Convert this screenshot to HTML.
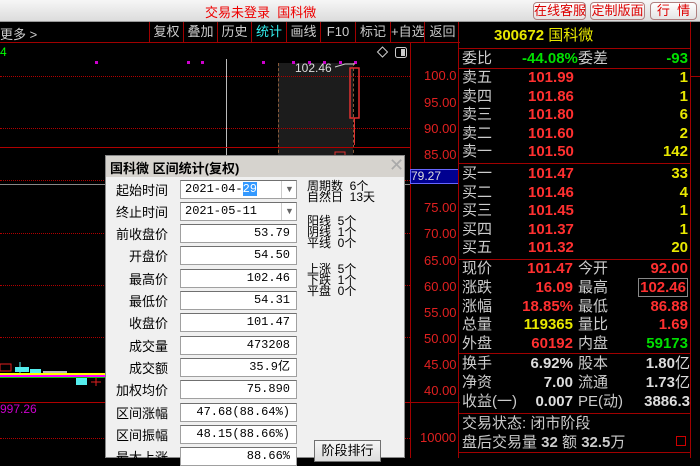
<!DOCTYPE html>
<html><head><meta charset="utf-8"><style>
*{margin:0;padding:0;box-sizing:border-box}
body{width:700px;height:458px;overflow:hidden;background:#000;font-family:"Liberation Sans","Noto Sans CJK SC",sans-serif;position:relative}
.a{position:absolute;white-space:nowrap}
#top{left:0;top:0;width:700px;height:22px;background:linear-gradient(#f6f6f6,#dcdcdc);border-bottom:1px solid #999}
.tb{top:2px;height:18px;border:1px solid #b08080;border-radius:4px;background:linear-gradient(#fff,#e4e4e4);color:#d00;font-size:13px;line-height:16px;text-align:center}
#tool{left:0;top:22px;width:460px;height:21px;border-bottom:1px solid #a00000}
.tt{top:22px;height:21px;border-left:1px solid #a00000;color:#ccc;font-size:13px;line-height:20px;text-align:center}
.ax{color:#e02020;font-size:13px;font-family:"Liberation Sans",sans-serif}
.dot{position:absolute;left:0;width:410px;border-top:1px dotted #b00000}
.p{font-size:15px;line-height:18px;color:#ccc}
.r{color:#ff3030}.y{color:#e8e800}.g{color:#00e000}.w{color:#ddd}
.num{font-family:"Liberation Sans",sans-serif;font-weight:bold;font-size:15px}
.hl{position:absolute;left:459px;width:232px;border-top:1px solid #a00000}
#dlg{left:105px;top:155px;width:300px;height:303px;background:#f0f0f0;border:1px solid #888}
.dlab{position:absolute;right:236px;font-size:13px;color:#000;text-align:right}
.inp{position:absolute;left:74px;width:117px;height:19px;background:#fff;border:1px solid #a0a0a0;border-top-color:#707070;font-family:"Liberation Mono",monospace;font-size:12px;text-align:right;padding-right:6px;line-height:17px;color:#000}
.sm{font-size:12px;color:#000;line-height:11px}
</style></head><body>
<div class="a" id="top"></div>
<div class="a" style="left:205px;top:2px;color:#e00;font-size:13px">交易未登录&nbsp;&nbsp;国科微</div>
<div class="a tb" style="left:533px;width:53px">在线客服</div>
<div class="a tb" style="left:590px;width:55px">定制版面</div>
<div class="a tb" style="left:650px;width:47px">行&nbsp;&nbsp;情</div>

<div class="a" id="tool"></div>
<div class="a" style="left:0;top:24px;color:#ccc;font-size:13px">更多 &gt;</div>
<div class="a tt" style="left:149px;width:34px">复权</div>
<div class="a tt" style="left:183px;width:34px">叠加</div>
<div class="a tt" style="left:217px;width:34px">历史</div>
<div class="a tt" style="left:251px;width:35px;color:#3ee">统计</div>
<div class="a tt" style="left:286px;width:34px">画线</div>
<div class="a tt" style="left:320px;width:35px">F10</div>
<div class="a tt" style="left:355px;width:35px">标记</div>
<div class="a tt" style="left:390px;width:34px">+自选</div>
<div class="a tt" style="left:424px;width:36px">返回</div>
<div class="a" style="left:0;top:45px;color:#0f0;font-size:12px">4</div>

<!-- chart -->
<div class="a" style="left:278px;top:63px;width:75px;height:95px;background:#1c1c1c;border-left:1px dashed #8a5a3a"></div>
<div class="a" style="left:353px;top:63px;height:95px;border-left:1px dashed #8a5a3a"></div>
<div class="a" style="left:226px;top:59px;width:1px;height:100px;background:#bbb"></div>
<div class="dot" style="top:76px"></div><div class="dot" style="top:128px"></div>
<div class="dot" style="top:180px"></div><div class="dot" style="top:233px"></div>
<div class="dot" style="top:285px"></div><div class="dot" style="top:337px"></div>
<div class="dot" style="top:438px"></div>
<div class="a" style="left:0;top:184px;width:410px;height:1px;background:#888"></div>
<div class="a" style="left:0;top:402px;width:410px;height:1px;background:#b00000"></div>
<div class="a" style="left:0;top:147px;width:410px;height:1px;background:#b00000"></div>
<svg class="a" style="left:0;top:45px" width="410" height="350">
<g fill="#c0c">
<rect x="95" y="16" width="3" height="3"/><rect x="187" y="16" width="3" height="3"/><rect x="201" y="16" width="3" height="3"/><rect x="262" y="16" width="3" height="3"/><rect x="292" y="16" width="3" height="3"/><rect x="308" y="16" width="3" height="3"/><rect x="323" y="16" width="3" height="3"/><rect x="339" y="16" width="3" height="3"/><rect x="354" y="16" width="3" height="3"/></g>
<rect x="350" y="23" width="9" height="50" fill="none" stroke="#e03030" stroke-width="1.5"/>
<line x1="354.5" y1="73" x2="354.5" y2="100" stroke="#e03030"/>
<rect x="335" y="107" width="10" height="10" fill="none" stroke="#e03030"/>
<path d="M335 22 l10 -3 l10 0" stroke="#ccc" fill="none"/>
<path d="M377.5 7 l5 -5 l5 5 l-5 5z" stroke="#ccc" fill="none"/>
<rect x="395.5" y="2.5" width="11" height="10" rx="2" stroke="#ccc" fill="none"/><rect x="401" y="4" width="4" height="7" fill="#ccc"/>
<g transform="translate(0,295)">
<rect x="0" y="24" width="11" height="7" fill="none" stroke="#e02020"/>
<rect x="15" y="27" width="14" height="5" fill="#5ee"/><line x1="20" y1="22" x2="20" y2="36" stroke="#5ee"/>
<rect x="30" y="29" width="11" height="4" fill="#5ee"/>
<rect x="43" y="31" width="24" height="3" fill="#bbb"/>
<rect x="76" y="37" width="11" height="8" fill="#5ee"/>
<line x1="96" y1="38" x2="96" y2="46" stroke="#e02020"/><line x1="91" y1="42" x2="101" y2="42" stroke="#e02020"/>
<rect x="0" y="33" width="105" height="2" fill="#ff0"/>
<rect x="0" y="35" width="105" height="2" fill="#f0f"/>
<rect x="0" y="37" width="105" height="1" fill="#0c0"/>
</g>
</svg>
<div class="a" style="left:295px;top:61px;color:#ddd;font-size:12px">102.46</div>
<div class="a" style="left:0;top:402px;color:#c0c;font-size:12px">997.26</div>

<!-- axis -->
<div class="a" style="left:410px;top:43px;width:1px;height:415px;background:#a00000"></div>
<div class="a ax" style="left:424px;top:68px">100.0</div>
<div class="a ax" style="left:424px;top:95px">95.00</div>
<div class="a ax" style="left:424px;top:121px">90.00</div>
<div class="a ax" style="left:424px;top:147px">85.00</div>
<div class="a" style="left:410px;top:169px;width:49px;height:15px;background:#000090;border:1px solid #66f;color:#ddd;font-size:12px;line-height:13px">79.27</div>
<div class="a ax" style="left:424px;top:200px">75.00</div>
<div class="a ax" style="left:424px;top:226px">70.00</div>
<div class="a ax" style="left:424px;top:253px">65.00</div>
<div class="a ax" style="left:424px;top:279px">60.00</div>
<div class="a ax" style="left:424px;top:305px">55.00</div>
<div class="a ax" style="left:424px;top:331px">50.00</div>
<div class="a ax" style="left:424px;top:357px">45.00</div>
<div class="a ax" style="left:424px;top:383px">40.00</div>
<div class="a" style="left:410px;top:402px;width:50px;height:1px;background:#a00000"></div>
<div class="a ax" style="left:420px;top:430px">10000</div>

<!-- right panel -->
<div class="a" style="left:458px;top:22px;width:1px;height:436px;background:#a00000"></div>
<div class="a" style="left:690px;top:22px;width:1px;height:436px;background:#a00000"></div>
<div class="a" style="left:691px;top:76px;width:9px;height:1px;background:#a00000"></div>
<div class="a y" style="left:494px;top:24px;font-size:15px"><b style="font-family:'Liberation Sans'">300672</b> 国科微</div>
<div class="hl" style="top:48px"></div>
<div class="a p" style="left:462px;top:50px">委比</div><div class="a num g" style="left:522px;top:50px">-44.08%</div>
<div class="a p" style="left:578px;top:50px">委差</div><div class="a num g" style="left:648px;top:50px;width:40px;text-align:right">-93</div>
<div class="hl" style="top:68px"></div>
<div class="a p" style="left:462px;top:69px;line-height:18.6px">卖五<br>卖四<br>卖三<br>卖二<br>卖一</div>
<div class="a num r" style="left:528px;top:69px;line-height:18.6px">101.99<br>101.86<br>101.80<br>101.60<br>101.50</div>
<div class="a num y" style="left:620px;top:69px;width:68px;text-align:right;line-height:18.6px">1<br>1<br>6<br>2<br>142</div>
<div class="hl" style="top:163px"></div>
<div class="a p" style="left:462px;top:165px;line-height:18.6px">买一<br>买二<br>买三<br>买四<br>买五</div>
<div class="a num r" style="left:528px;top:165px;line-height:18.6px">101.47<br>101.46<br>101.45<br>101.37<br>101.32</div>
<div class="a num y" style="left:620px;top:165px;width:68px;text-align:right;line-height:18.6px">33<br>4<br>1<br>1<br>20</div>
<div class="hl" style="top:259px"></div>
<div class="a p" style="left:462px;top:260px;line-height:18.8px">现价<br>涨跌<br>涨幅<br>总量<br>外盘</div>
<div class="a num" style="left:500px;top:260px;width:73px;text-align:right;line-height:18.8px"><span class="r">101.47</span><br><span class="r">16.09</span><br><span class="r">18.85%</span><br><span class="y">119365</span><br><span class="r">60192</span></div>
<div class="a p" style="left:578px;top:260px;line-height:18.8px">今开<br>最高<br>最低<br>量比<br>内盘</div>
<div class="a num" style="left:610px;top:260px;width:78px;text-align:right;line-height:18.8px"><span class="r">92.00</span><br><span class="r" style="border:1px solid #888;padding:0 1px">102.46</span><br><span class="r">86.88</span><br><span class="r">1.69</span><br><span class="g">59173</span></div>
<div class="hl" style="top:353px"></div>
<div class="a p" style="left:462px;top:354px;line-height:19px">换手<br>净资<br>收益(一)</div>
<div class="a num w" style="left:500px;top:354px;width:73px;text-align:right;line-height:19px">6.92%<br>7.00<br>0.007</div>
<div class="a p" style="left:578px;top:354px;line-height:19px">股本<br>流通<br>PE(动)</div>
<div class="a num w" style="left:610px;top:354px;width:80px;text-align:right;line-height:19px">1.80<span style="font-weight:normal">亿</span><br>1.73<span style="font-weight:normal">亿</span><br>3886.3</div>
<div class="hl" style="top:413px"></div>
<div class="a p" style="left:462px;top:414px;line-height:19px">交易状态: 闭市阶段<br>盘后交易量 <b class="num">32</b> 额 <b class="num">32.5</b>万</div>
<div class="a" style="left:676px;top:436px;width:10px;height:10px;border:1px solid #c00"></div>
<div class="hl" style="top:452px"></div>

<!-- dialog -->
<div class="a" id="dlg">
<div class="a" style="left:0;top:0;width:298px;height:21px;background:#d6d3ce"></div>
<div class="a" style="left:4px;top:2px;font-size:13px;font-weight:bold;color:#000">国科微 区间统计(复权)</div>
<div class="a" style="left:283px;top:-1px;font-size:18px;color:#aaa">✕</div>
<div class="dlab" style="top:24px">起始时间</div><div class="inp" style="top:24px;text-align:left;padding-left:4px">2021-04-<span style="background:#39f;color:#fff">29</span></div><div class="a" style="left:175px;top:25px;width:16px;height:17px;border-left:1px solid #ccc;color:#666;font-size:9px;text-align:center;line-height:17px">▼</div>
<div class="dlab" style="top:46px">终止时间</div><div class="inp" style="top:46px;text-align:left;padding-left:4px">2021-05-11</div><div class="a" style="left:175px;top:47px;width:16px;height:17px;border-left:1px solid #ccc;color:#666;font-size:9px;text-align:center;line-height:17px">▼</div>
<div class="dlab" style="top:68px">前收盘价</div><div class="inp" style="top:68px">53.79</div>
<div class="dlab" style="top:90px">开盘价</div><div class="inp" style="top:90px">54.50</div>
<div class="dlab" style="top:113px">最高价</div><div class="inp" style="top:113px">102.46</div>
<div class="dlab" style="top:135px">最低价</div><div class="inp" style="top:135px">54.31</div>
<div class="dlab" style="top:157px">收盘价</div><div class="inp" style="top:157px">101.47</div>
<div class="dlab" style="top:180px">成交量</div><div class="inp" style="top:180px">473208</div>
<div class="dlab" style="top:202px">成交额</div><div class="inp" style="top:202px">35.9亿</div>
<div class="dlab" style="top:224px">加权均价</div><div class="inp" style="top:224px">75.890</div>
<div class="dlab" style="top:247px">区间涨幅</div><div class="inp" style="top:247px">47.68(88.64%)</div>
<div class="dlab" style="top:269px">区间振幅</div><div class="inp" style="top:269px">48.15(88.66%)</div>
<div class="dlab" style="top:291px">最大上涨</div><div class="inp" style="top:291px">88.66%</div>
<div class="a sm" style="left:201px;top:25px">周期数&nbsp;&nbsp;6个<br>自然日&nbsp;&nbsp;13天</div>
<div class="a sm" style="left:201px;top:60px">阳线&nbsp;&nbsp;5个<br>阴线&nbsp;&nbsp;1个<br>平线&nbsp;&nbsp;0个</div>
<div class="a sm" style="left:201px;top:108px">上涨&nbsp;&nbsp;5个<br>下跌&nbsp;&nbsp;1个<br>平盘&nbsp;&nbsp;0个</div>
<div class="a" style="left:208px;top:284px;width:67px;height:22px;border:1px solid #707070;background:linear-gradient(#f6f6f6,#dcdcdc);font-size:13px;text-align:center;line-height:20px;color:#000">阶段排行</div>
</div>
</body></html>
